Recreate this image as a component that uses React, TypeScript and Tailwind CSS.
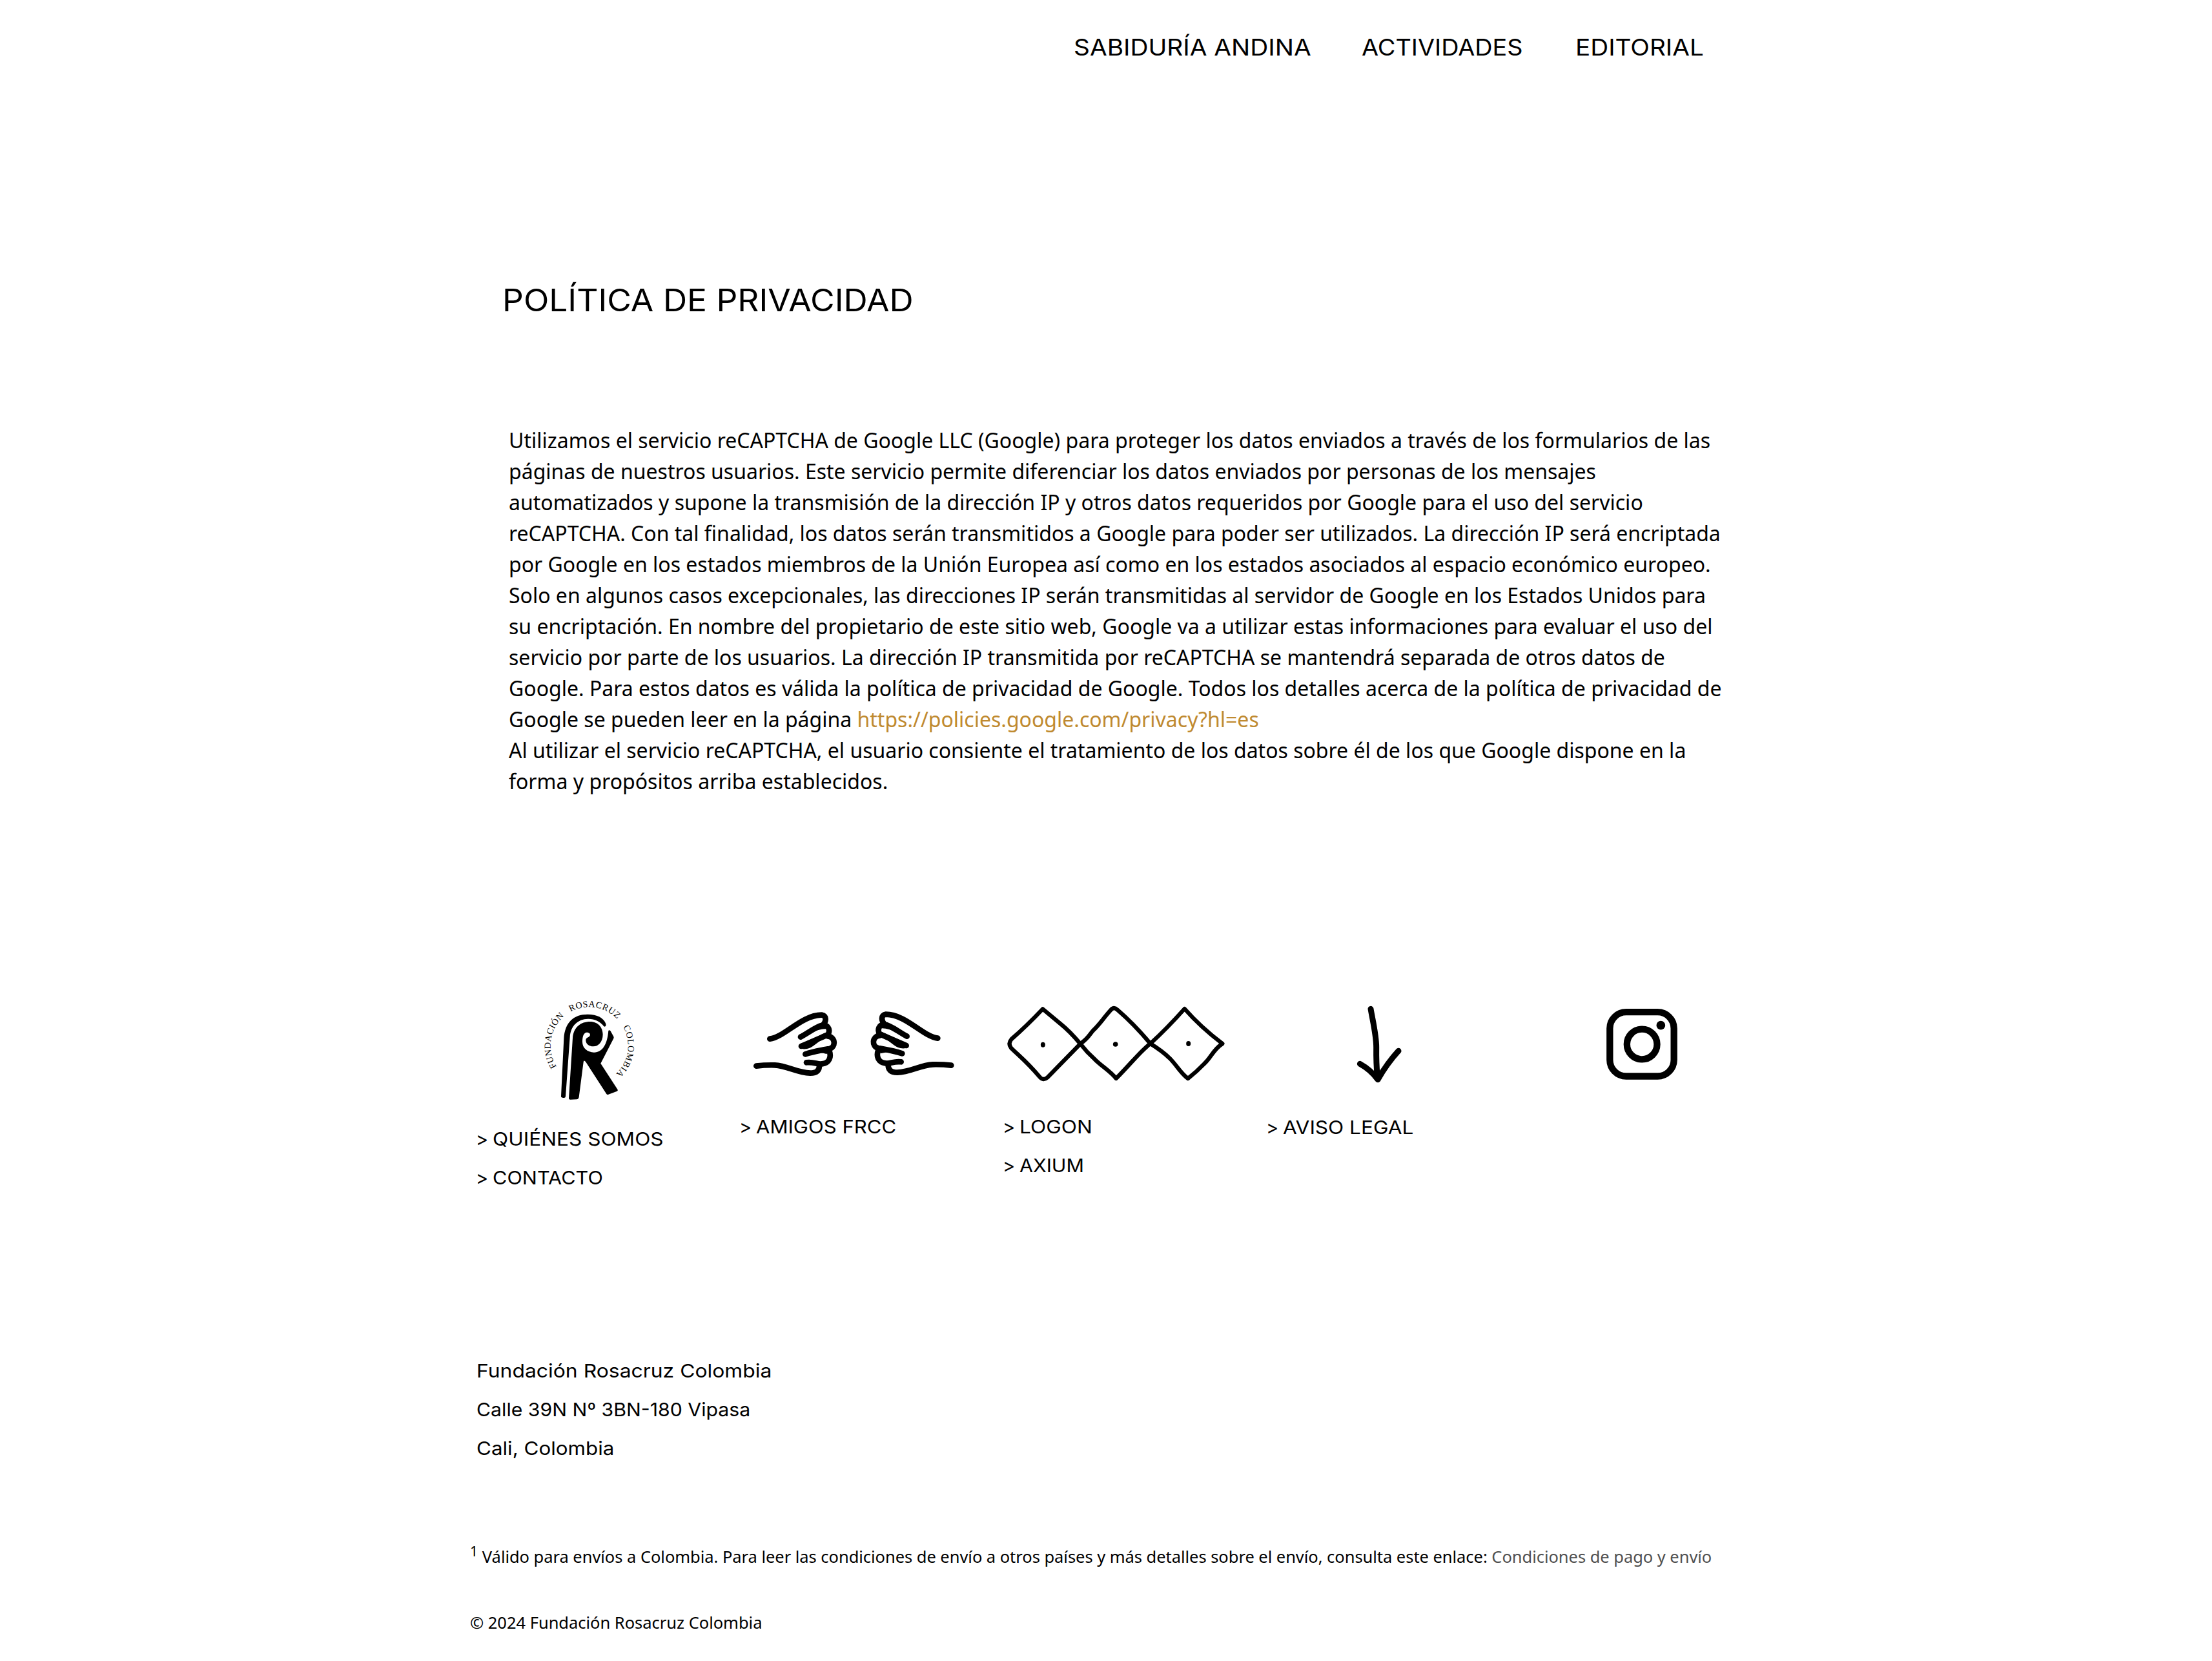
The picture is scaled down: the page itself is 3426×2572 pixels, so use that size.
import type { ReactNode } from "react";

function FoundationLogo() {
  return (
    <svg viewBox="0 0 570 570" className="ml-[92px] block h-[190px] w-[190px]">
      <defs>
        <path id="arc-fundacion" d="M126.5 365.2A180 180 0 0 1 163.5 129" />
        <path id="arc-rosacruz" d="M191 110A180 180 0 0 1 409 145" />
        <path id="arc-colombia" d="M435 180A180 180 0 0 1 398 402.2" />
      </defs>
      <g fontFamily="'Liberation Serif', serif" fontSize="42" fill="#000">
        <text textLength="259"><textPath href="#arc-fundacion" textLength="259">FUNDACIÓN</textPath></text>
        <text textLength="236"><textPath href="#arc-rosacruz" textLength="236">ROSACRUZ</textPath></text>
        <text textLength="238"><textPath href="#arc-colombia" textLength="238">COLOMBIA</textPath></text>
      </g>
      <path d="M147 503 L160 235 C164 160 205 122 270 122 C315 122 345 138 355 166 C358 176 352 182 346 178 C330 155 300 142 272 143 C225 144 191 175 188 228 L168 504 Q167 511 158 510 Q147 509 147 503Z" />
      <path d="M183 512 L201 232 C205 182 238 156 282 156 C320 156 341 185 341 215 C341 250 320 271 297 271 C275 271 262 258 262 243 C262 230 272 232 280 223 C286 212 277 205 265 206 C250 208 246 230 246 250 C246 280 270 298 300 299 C340 299 362 260 367 198 Q370 193 376 198 L391 225 Q393 230 391 234 L331 350 L410 472 Q412 477 407 479 L367 494 Q361 496 358 492 L261 342 Q252 332 251 344 L230 506 Q228 516 220 517 L190 518 Q183 518 183 512Z" />
    </svg>
  );
}

function Hand() {
  return (
    <g fill="none" stroke="#000" strokeWidth="26" strokeLinecap="round" strokeLinejoin="round">
      <path d="M127 206 C195 198 275 95 368 95 C394 98 388 126 374 142 C345 146 310 176 270 197" />
      <path d="M374 142 C402 142 408 168 397 186 C362 202 320 220 273 240" />
      <path d="M395 193 C433 196 435 245 403 252 C370 258 330 264 292 277" />
      <path d="M403 260 C414 290 404 318 370 322 C350 326 330 311 297 316" />
      <path d="M357 328 C358 352 345 365 315 365 C250 362 210 331 150 328 Q105 327 64 332" />
      <path fill="#000" stroke="none" d="M320 175 L372 140 L392 160 Q375 158 350 166Z M272 228 L385 178 L415 200 Q385 200 365 212 C340 228 322 248 300 252 Q275 256 268 246Z M330 258 L410 238 L415 262 L390 276 Q360 268 330 272Z" />
    </g>
  );
}

function HandsIcon() {
  return (
    <svg viewBox="0 0 1050 480" className="ml-[14px] block h-[160px] w-[350px]">
      <Hand />
      <g transform="translate(1034,-3) scale(-1,1)">
        <Hand />
      </g>
    </svg>
  );
}

function DiamondsIcon() {
  return (
    <svg viewBox="12 0 1098 480" className="block h-[160px] w-[366px]">
      <g fill="none" stroke="#000" strokeWidth="19" strokeLinejoin="round">
        <path d="M225 67 Q150 146 80 207 Q62 228 78 248 C115 285 150 310 212 384 Q228 402 246 386 L400 229 Q350 170 310 138 Z" />
        <path d="M400 229 C442 198 440 188 460 166 C490 138 505 112 542 71 Q556 55 572 71 Q650 138 725 228 C680 262 640 315 566 390 C540 356 500 334 468 302 Q430 268 400 229Z" />
        <path d="M725 228 Q800 160 884 66 C940 130 990 175 1060 228 C1015 258 1010 290 975 322 C950 348 930 366 900 390 C870 370 850 332 815 296 Q780 262 725 228Z" />
      </g>
      <ellipse cx="226" cy="233" rx="10.500" ry="12" />
      <circle cx="563" cy="231" r="11.500" />
      <ellipse cx="902" cy="228" rx="10.500" ry="12" />
    </svg>
  );
}

function ArrowIcon() {
  return (
    <svg viewBox="0 0 330 450" className="ml-[128px] block h-[150px] w-[110px]">
      <g fill="none" stroke="#000" strokeWidth="27" strokeLinecap="round" strokeLinejoin="round">
        <path d="M129 67 C140 130 155 190 155 245 Q154 320 160 380" />
        <path d="M79 322 Q130 350 162 395 Q205 320 258 262" />
      </g>
    </svg>
  );
}

function InstagramIcon() {
  return (
    <svg viewBox="0 0 450 450" className="ml-[110px] block h-[150px] w-[150px]">
      <g fill="none" stroke="#000" strokeWidth="31">
        <rect x="70" y="81.500" width="298" height="298" rx="76" />
        <circle cx="219.500" cy="231" r="70" />
      </g>
      <circle cx="307" cy="143" r="20.500" />
    </svg>
  );
}

function FooterColumn({ icon, children }: { icon: ReactNode; children?: ReactNode }) {
  return (
    <div className="w-[408px] shrink-0">
      {icon}
      {children}
    </div>
  );
}

function FooterLink({ stretch, children }: { stretch: string; children: ReactNode }) {
  return (
    <a className="flex">
      <span className="w-[26px]">&gt;</span>
      <span className={`origin-left ${stretch}`}>{children}</span>
    </a>
  );
}

export default function App() {
  return (
    <div className="h-[2572px] w-[3426px] overflow-hidden bg-white text-black">
      <div className="mx-auto w-[1970px]">
        <header className="flex h-[435px] items-start pt-[43px] pl-[935px] font-['Inter',sans-serif] text-[35px] leading-[60px] whitespace-nowrap">
          <a className="w-[446px]"><span className="inline-block origin-left scale-x-[1.108]">SABIDURÍA ANDINA</span></a>
          <a className="w-[331px]"><span className="inline-block origin-left scale-x-[1.08]">ACTIVIDADES</span></a>
          <a><span className="inline-block origin-left scale-x-[1.105]">EDITORIAL</span></a>
        </header>

        <main className="h-[1095px]">
          <h1 className="pl-[50px] font-['Inter',sans-serif] text-[47.5px] leading-[60px]">
            <span className="inline-block origin-left scale-x-[1.084]">POLÍTICA DE PRIVACIDAD</span>
          </h1>
          <p className="mt-[163px] ml-[60px] w-[1886px] font-['Noto_Sans',sans-serif] text-[32px] leading-[48px]">
            Utilizamos el servicio reCAPTCHA de Google LLC (Google) para proteger los datos enviados a través de los
            formularios de las páginas de nuestros usuarios. Este servicio permite diferenciar los datos enviados por
            personas de los mensajes automatizados y supone la transmisión de la dirección IP y otros datos requeridos
            por Google para el uso del servicio reCAPTCHA. Con tal finalidad, los datos serán transmitidos a Google para
            poder ser utilizados. La dirección IP será encriptada por Google en los estados miembros de la Unión Europea
            así como en los estados asociados al espacio económico europeo. Solo en algunos casos excepcionales, las
            direcciones IP serán transmitidas al servidor de Google en los Estados Unidos para su encriptación. En
            nombre del propietario de este sitio web, Google va a utilizar estas informaciones para evaluar el uso del
            servicio por parte de los usuarios. La dirección IP transmitida por reCAPTCHA se mantendrá separada de otros
            datos de Google. Para estos datos es válida la política de privacidad de Google. Todos los detalles acerca
            de la política de privacidad de Google se pueden leer en la página{" "}
            <a className="text-[#bf8a30]">https://policies.google.com/privacy?hl=es</a>
            <br />
            Al utilizar el servicio reCAPTCHA, el usuario consiente el tratamiento de los datos sobre él de los que
            Google dispone en la forma y propósitos arriba establecidos.
          </p>
        </main>

        <footer>
          <div className="flex h-[563px] font-['Inter',sans-serif] text-[29px] leading-[60px] whitespace-nowrap">
            <FooterColumn icon={<FoundationLogo />}>
              <div className="mt-[14px] pl-[9px]">
                <FooterLink stretch="scale-x-[1.09]">QUIÉNES SOMOS</FooterLink>
                <FooterLink stretch="scale-x-[1.057]">CONTACTO</FooterLink>
              </div>
            </FooterColumn>
            <FooterColumn icon={<div className="pt-[10px]"><HandsIcon /></div>}>
              <div className="mt-[15px] pl-[9px]">
                <FooterLink stretch="scale-x-[1.071]">AMIGOS FRCC</FooterLink>
              </div>
            </FooterColumn>
            <FooterColumn icon={<div className="pt-[10px]"><DiamondsIcon /></div>}>
              <div className="mt-[15px] pl-[9px]">
                <FooterLink stretch="scale-x-[1.09]">LOGON</FooterLink>
                <FooterLink stretch="scale-x-[1.048]">AXIUM</FooterLink>
              </div>
            </FooterColumn>
            <FooterColumn icon={<div className="pt-[10px]"><ArrowIcon /></div>}>
              <div className="mt-[26px] pl-[9px]">
                <FooterLink stretch="scale-x-[1.088]">AVISO LEGAL</FooterLink>
              </div>
            </FooterColumn>
            <FooterColumn icon={<div className="pt-[10px]"><InstagramIcon /></div>} />
          </div>

          <address className="flex h-[298px] flex-col items-start pl-[10px] font-['Inter',sans-serif] text-[29px] leading-[60px] not-italic">
            <p className="origin-left scale-x-[1.099]">Fundación Rosacruz Colombia</p>
            <p className="origin-left scale-x-[1.043]">Calle 39N Nº 3BN-180 Vipasa</p>
            <p className="origin-left scale-x-[1.081]">Cali, Colombia</p>
          </address>

          <div className="font-['Noto_Sans',sans-serif] text-[25.5px] leading-[38px] whitespace-nowrap">
            <p className="tracking-[-0.038px]">
              <sup className="-top-[10px] align-baseline text-[21.5px]">1</sup> Válido para envíos a Colombia. Para leer las
              condiciones de envío a otros países y más detalles sobre el envío, consulta este enlace:{" "}
              <a className="text-[#505050]">Condiciones de pago y envío</a>
            </p>
            <p className="mt-[64px] tracking-[-0.02px]">© 2024 Fundación Rosacruz Colombia</p>
          </div>
        </footer>
      </div>
    </div>
  );
}
